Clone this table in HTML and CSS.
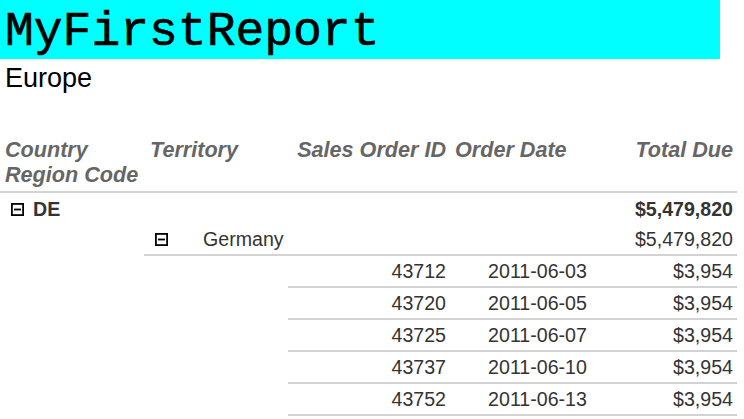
FILE: index.html
```html
<!DOCTYPE html>
<html>
<head>
<meta charset="utf-8">
<link rel="stylesheet" href="styles.css">
</head>
<body>
<div class="title">MyFirstReport</div>
<div class="subtitle">Europe</div>
<table class="report">
  <colgroup>
    <col class="c1"><col class="c2"><col class="c3"><col class="c4"><col class="c5">
  </colgroup>
  <thead>
    <tr>
      <th class="left">Country<br>Region Code</th>
      <th class="left terr">Territory</th>
      <th class="right">Sales Order ID</th>
      <th class="left">Order Date</th>
      <th class="right">Total Due</th>
    </tr>
  </thead>
  <tbody>
    <tr class="group">
      <td class="cc"><svg class="tog" width="13" height="13" viewBox="0 0 13 13"><rect x="0.9" y="0.9" width="11.2" height="11.2" fill="#fff" stroke="#000" stroke-width="1.8"/><line x1="3" y1="6.5" x2="10" y2="6.5" stroke="#000" stroke-width="1.8"/></svg>DE</td>
      <td></td><td></td><td></td>
      <td class="num">$5,479,820</td>
    </tr>
    <tr class="sub">
      <td class="blank"></td>
      <td class="terr-cell"><svg class="tog tog2" width="13" height="13" viewBox="0 0 13 13"><rect x="0.9" y="0.9" width="11.2" height="11.2" fill="#fff" stroke="#000" stroke-width="1.8"/><line x1="3" y1="6.5" x2="10" y2="6.5" stroke="#000" stroke-width="1.8"/></svg>Germany</td>
      <td></td><td></td>
      <td class="num">$5,479,820</td>
    </tr>
    <tr class="det">
      <td class="blank"></td><td class="blank"></td>
      <td class="num">43712</td><td class="date">2011-06-03</td><td class="num">$3,954</td>
    </tr>
    <tr class="det">
      <td class="blank"></td><td class="blank"></td>
      <td class="num">43720</td><td class="date">2011-06-05</td><td class="num">$3,954</td>
    </tr>
    <tr class="det">
      <td class="blank"></td><td class="blank"></td>
      <td class="num">43725</td><td class="date">2011-06-07</td><td class="num">$3,954</td>
    </tr>
    <tr class="det">
      <td class="blank"></td><td class="blank"></td>
      <td class="num">43737</td><td class="date">2011-06-10</td><td class="num">$3,954</td>
    </tr>
    <tr class="det">
      <td class="blank"></td><td class="blank"></td>
      <td class="num">43752</td><td class="date">2011-06-13</td><td class="num">$3,954</td>
    </tr>
  </tbody>
</table>
</body>
</html>
```

FILE: styles.css
```css
html, body {
  margin: 0;
  padding: 0;
  background: #fff;
}
body {
  font-family: "Liberation Sans", Arial, sans-serif;
  color: #333;
}
.title {
  width: 720px;
  height: 59px;
  box-sizing: border-box;
  padding: 6px 0 0 5px;
  background: #00ffff;
  color: #000;
  font-family: "Liberation Mono", "Courier New", monospace;
  font-size: 48px;
  line-height: 53px;
  white-space: nowrap;
  overflow: hidden;
  -webkit-text-stroke: 0.6px #000;
}
.subtitle {
  margin-top: 4px;
  padding-left: 5px;
  font-size: 27px;
  line-height: 30px;
  color: #000;
}
.report {
  margin-top: 40px;
  border-collapse: collapse;
  table-layout: fixed;
  width: 737px;
}
.c1 { width: 144px; }
.c2 { width: 144px; }
.c3 { width: 162px; }
.c4 { width: 175px; }
.c5 { width: 112px; }
.report th {
  font-size: 21.6px;
  line-height: 25px;
  font-weight: bold;
  font-style: italic;
  color: #666;
  vertical-align: top;
  padding: 4px 4px 4px 4px;
  border-bottom: 2px solid #d3d3d3;
  white-space: nowrap;
}
.report th.left { text-align: left; padding-left: 5px; }
.report th.terr { padding-left: 6px; }
.report th.right { text-align: right; }
.report td {
  font-size: 19.6px;
  line-height: 30px;
  height: 30px;
  padding: 0 4px;
  white-space: nowrap;
  color: #333;
  border-bottom: 2px solid #d3d3d3;
}
.report tr.group td {
  border-bottom: 0;
  font-weight: bold;
  height: 31px;
}
.report td.blank { border-bottom: 0; }
.report td.num { text-align: right; }
.report td.date { text-align: center; }
.report td.cc { padding-left: 11px; }
.report td.terr-cell { padding-left: 11px; }
.tog {
  display: inline-block;
  vertical-align: baseline;
  margin-right: 9px;
}
.tog2 { margin-right: 35px; }
```
